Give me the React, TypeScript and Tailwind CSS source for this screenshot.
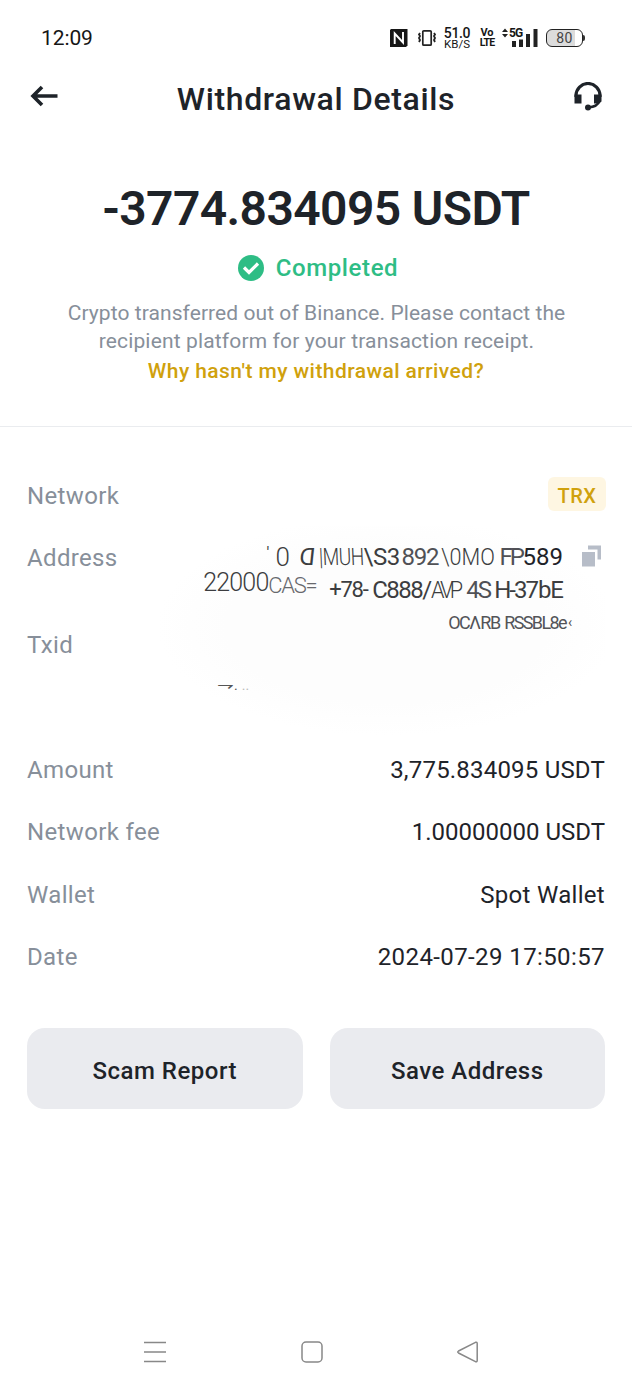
import type { ReactNode } from "react";

const details = [
    { label: "Amount", value: "3,775.834095 USDT", tracking: "tracking-[0.2px]" },
    { label: "Network fee", value: "1.00000000 USDT", tracking: "tracking-[0px]" },
    { label: "Wallet", value: "Spot Wallet", tracking: "tracking-[0.3px]" },
    { label: "Date", value: "2024-07-29 17:50:57", tracking: "tracking-[0.4px]" },
];

function StatusBar() {
    return (
        <div className="flex h-[76px] items-center pl-[41px] pr-[47px] text-[#161616]">
            <span className="pt-0.5 text-[21px] tracking-[-0.1px]">12:09</span>
            <div className="ml-auto flex items-center">
                <svg width="18" height="18" viewBox="0 0 18 18">
                    <path d="M1 0h16.500v16.500L16 18H0V1z" fill="#161616" />
                    <path d="M4.700 15V4.500L13 13.500V3" fill="none" stroke="#fff" strokeWidth="1.900" />
                </svg>
                <svg className="ml-[9px]" width="20" height="18" viewBox="0 0 20 18" fill="none" stroke="#222">
                    <rect x="5.800" y="1.800" width="8.400" height="14.400" rx="1" strokeWidth="1.700" />
                    <path d="M3 4l-1 1.500 1 1.500-1 2 1 2-1 2M17 4l1 1.500-1 1.500 1 2-1 2 1 2" strokeWidth="1.800" />
                </svg>
                <div className="ml-1.5 w-7 text-center">
                    <div className="text-[14px] font-medium leading-3 tracking-[-0.3px]">51.0</div>
                    <div className="text-[11.5px] leading-[11px]">KB/S</div>
                </div>
                <div className="ml-2 flex w-4 flex-col items-center font-bold">
                    <div className="text-[11px] leading-[10px]">Vo</div>
                    <div className="text-[10.5px] leading-[10px] tracking-[-0.8px]">LTE</div>
                </div>
                <div className="ml-[7px] flex h-5 w-9">
                    <svg width="7" height="20" viewBox="0 0 7 20" fill="#222">
                        <path d="M0 4l3-3.500L6 4zM0 6h6L3 9.500z" />
                    </svg>
                    <span className="w-3.5 text-[12px] font-bold leading-[10px] tracking-[-0.8px]">5G</span>
                    <svg className="-ml-3" width="27" height="20" viewBox="0 0 27 20" fill="#222">
                        <path d="M1 13h4v6H1zM8 11.500h4v7.500H8zM15 6h4v13h-4zM22.500 1h4v18h-4z" />
                    </svg>
                </div>
                <div className="ml-2 flex items-center">
                    <div className="flex h-[18px] w-[37px] items-center justify-center rounded-md border-[1.5px] border-[#222] bg-linear-to-r from-[#dcdcdc] from-80% to-white to-80% pt-px text-[14px] tracking-[0.5px] text-[#444]">80</div>
                    <div className="h-1.5 w-[2px] rounded-r bg-[#333]" />
                </div>
            </div>
        </div>
    );
}

function Header() {
    return (
        <header className="relative flex h-11 items-center justify-center">
            <svg className="absolute left-[30px] top-[9px]" width="28" height="22" viewBox="0 0 28 22" fill="none" stroke="#1e2329" strokeWidth="3.600">
                <path d="M3 11H27.500M12 2l-9 9 9 9" />
            </svg>
            <h1 className="pt-0.5 text-[32px] font-medium tracking-[0.65px]">Withdrawal Details</h1>
            <svg className="absolute left-[574px] top-1.5" width="28" height="30" viewBox="0 0 28 30" fill="#1e2329">
                <path d="M2 15v-1.500a12 12 0 0 1 24 0V15" fill="none" stroke="#1e2329" strokeWidth="3.200" />
                <path d="M25.500 19c-1.500 4-5 6-11 6.500" fill="none" stroke="#1e2329" strokeWidth="2.500" />
                <path d="M.5 12.500H7.500v9H.5zM20 12.500h7.500v7L25 21.500h-5z" />
                <circle cx="14" cy="25.500" r="3" />
            </svg>
        </header>
    );
}

function Label({ children }: { children: ReactNode }) {
    return <div className="flex h-[62px] shrink-0 items-center pt-px text-2xl tracking-[0.35px] text-[#878f9a]">{children}</div>;
}

function Address() {
    return (
        <div className="ml-auto flex flex-col items-end whitespace-nowrap text-[#3c3d40]">
            <div className="mt-[17px] flex h-7 items-center text-2xl leading-7">
                <span className="w-[9px] text-base leading-3 -translate-y-1">'</span>
                <span className="w-6 text-[26px] font-light">0</span>
                <span className="inline-block w-[15px] -scale-x-100 skew-x-6">D</span>
                <span className="ml-1 inline-block w-[45px] origin-left scale-x-80 skew-x-3 font-light tracking-[-0.8px]">|MUH</span>
                <span className="w-[34px] tracking-[-0.5px]">\S3</span>
                <span className="ml-1 w-[39px] tracking-[-1.2px] text-[#505156]">892</span>
                <span className="inline-block w-[59px] origin-left scale-x-90 font-light">\0MO</span>
                <span className="w-[22px] tracking-[-3px] text-[#505156]">FP</span>
                <span className="pl-px text-[#1e2329]">589</span>
            </div>
            <div className="flex h-[38px] items-center text-2xl">
                <span className="w-[65px] -translate-y-[7px] text-[25px] font-light tracking-[-0.8px]">22000</span>
                <span className="w-[61px] -translate-y-1 text-[22px] font-light tracking-[-1.2px] text-[#68696d]">CAS=</span>
                <span className="w-[43px] text-[22px] tracking-[-1.2px]">+78-</span>
                <span className="w-[59px] tracking-[-1.5px]">C888/</span>
                <span className="inline-block w-[35px] origin-left scale-x-90 font-light tracking-[-4px]">AVP</span>
                <span className="w-[28px] tracking-[-2px] text-[#505156]">4S</span>
                <span className="tracking-[-2px]">H-3</span>
                <span className="tracking-[-1px]">7bE</span>
            </div>
            <div className="-mr-2 mt-[3px] flex h-5 items-center text-[18px] tracking-[-1.2px] text-[#535458]">
                <span className="w-[32px] tracking-[-1.5px]">OCΛ</span>
                <span className="w-6">RB</span>
                <span className="tracking-[-1.6px]">RSSBL8e</span>
                <span className="ml-0.5 text-sm">‹</span>
            </div>
        </div>
    );
}

function CopyIcon() {
    return (
        <svg className="ml-[19px] mr-1 mt-[19px] shrink-0" width="19" height="22" viewBox="0 0 19 22" fill="#b7bdc8">
            <path d="M0 7h13v14.500H0zM6 .5h13v14h-3.500V4.500H6z" />
        </svg>
    );
}

export default function App() {
    return (
        <div className="flex h-[1390px] w-[632px] flex-col overflow-hidden bg-white font-['Roboto',sans-serif] text-[#1e2329]">
            <StatusBar />
            <Header />

            <section className="flex flex-col items-center border-b border-[#eaecef] pb-[41px] text-center">
                <div className="mt-[60px] flex h-14 items-center whitespace-nowrap pt-0.5 text-[48px] font-semibold tracking-[-0.6px]">-3774.834095 USDT</div>
                <div className="mt-4 flex h-8 items-center gap-3 pl-1 text-2xl font-medium tracking-[0.6px] text-[#2ebd85]">
                    <svg width="26" height="26" viewBox="0 0 26 26">
                        <circle cx="13" cy="13" r="13" fill="#2ebd85" />
                        <path d="M6 12.500l5 5 9-9" fill="none" stroke="#fff" strokeWidth="3.200" />
                    </svg>
                    Completed
                </div>
                <p className="mt-[15px] whitespace-nowrap pl-px text-[21px] leading-7 tracking-[0.07px] text-[#878f9a]">
                    Crypto transferred out of Binance. Please contact the
                    <br />
                    <span className="tracking-[0.15px]">recipient platform for your transaction receipt.</span>
                </p>
                <a className="mt-0.5 h-7 text-[21px] font-medium leading-7 tracking-[0.43px] text-[#d0a10d]">Why hasn't my withdrawal arrived?</a>
            </section>

            <section className="mt-[37px] px-[27px]">
                <div className="flex justify-between">
                    <Label>Network</Label>
                    <div className="-mr-px mt-[13px] flex h-[34px] w-[58px] items-center justify-center rounded-md bg-[#fef6e2] pt-[3px] text-[20px] font-medium tracking-[0.5px] text-[#d0a10d]">TRX</div>
                </div>
                <div className="bg-[radial-gradient(230px_110px_at_360px_100px,#fdfdfd_70%,white)]">
                    <div className="flex h-[87px] items-start">
                        <Label>Address</Label>
                        <Address />
                        <CopyIcon />
                    </div>
                    <div className="flex h-[125px] items-start">
                        <Label>Txid</Label>
                        <span className="ml-[144px] mt-[60px] flex items-center text-[#555]">
                            <span className="inline-block scale-y-75 text-xl leading-6">⇁</span>
                            <span className="text-sm leading-6">.</span>
                            <span className="ml-1 text-sm leading-6 text-[#bbb]">..</span>
                        </span>
                    </div>
                </div>
                {details.map((item) => (
                    <div key={item.label} className="flex h-[62.5px] items-start justify-between">
                        <Label>{item.label}</Label>
                        <div className={`flex h-[62px] items-center pt-px text-2xl ${item.tracking}`}>{item.value}</div>
                    </div>
                ))}
                <div className="mt-10 grid grid-cols-2 gap-[27px] text-2xl font-medium tracking-[0.5px]">
                    <button className="h-[81px] rounded-[18px] bg-[#eaebef] pt-1">Scam Report</button>
                    <button className="h-[81px] rounded-[18px] bg-[#eaebef] pt-1">Save Address</button>
                </div>
            </section>

            <nav className="mt-auto mb-[27px] flex items-center pl-36">
                <svg width="22" height="22" viewBox="0 0 22 22" stroke="#888" strokeWidth="1.500">
                    <path d="M0 1.500h22M0 11h22M0 20.500h22" />
                </svg>
                <svg className="ml-[135px]" width="22" height="22" viewBox="0 0 22 22" fill="none" stroke="#888" strokeWidth="1.500">
                    <rect x="1" y="1" width="20" height="20" rx="4" />
                </svg>
                <svg className="ml-[134px]" width="22" height="22" viewBox="0 0 22 22" fill="none" stroke="#888" strokeWidth="1.500" strokeLinejoin="round">
                    <path d="M18.500 1.300L1.500 10q-1.500 1 0 2l17 8.700q1.700.5 1.700-1.200v-17q0-1.700-1.700-1.200z" />
                </svg>
            </nav>
        </div>
    );
}
